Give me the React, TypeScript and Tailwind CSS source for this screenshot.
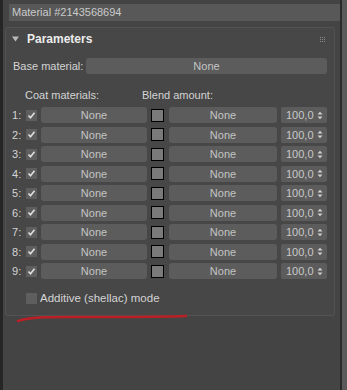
import React from 'react';

const rows = [1, 2, 3, 4, 5, 6, 7, 8, 9];

const Check: React.FC<{ checked?: boolean }> = ({ checked }) => (
    <div className="w-[11px] h-[11px] shrink-0 bg-[#5e5e5e] flex items-center justify-center">
        {checked && (
            <svg width="9" height="9" viewBox="0 0 9 9">
                <path d="M1.5 4.5 L3.5 6.8 L7.5 1.8" stroke="#e0e0e0" strokeWidth="1.6" fill="none" />
            </svg>
        )}
    </div>
);

const Btn: React.FC<{ className?: string; children?: React.ReactNode }> = ({ className, children }) => (
    <div className={`h-[16px] shrink-0 rounded-[3px] bg-[#5c5c5c] text-[#c4c4c4] flex items-center justify-center ${className ?? ''}`}>{children}</div>
);

const Spinner: React.FC = () => (
    <div className="w-[46px] h-[16px] shrink-0 rounded-[2px] bg-[#5c5c5c] text-[#c8c8c8] flex items-center pl-[5px] pr-[4px] justify-between">
        <span>100,0</span>
        <svg width="6" height="9" viewBox="0 0 6 9">
            <path d="M0.5 3.5 L3 0.8 L5.5 3.5 Z M0.5 5.5 L3 8.2 L5.5 5.5 Z" fill="#d0d0d0" />
        </svg>
    </div>
);

export default function App() {
    return (
        <div className="w-[347px] h-[390px] bg-[#3a3a3a] flex overflow-hidden text-[11px] whitespace-nowrap" style={{ fontFamily: '"Liberation Sans", Arial, sans-serif' }}>
            <div className="w-[3px] bg-[#262626]" />
            <div className="w-[337px] bg-[#444444] relative pt-[4px] pl-[2px]">
                <div className="ml-[4px] h-[17px] bg-[#585858] text-[#cacaca] flex items-center pl-[3px]">Material #2143568694</div>
                <div className="mt-[6px] w-[330px] h-[289px] bg-[#474747] border border-[#525252] rounded-[2px]">
                    <div className="h-[20px] flex items-center pl-[6px] pr-[9px] mt-[1px]">
                        <svg width="7" height="6" viewBox="0 0 7 6"><path d="M0 0.5 H7 L3.5 5.5 Z" fill="#b8b8b8" /></svg>
                        <span className="ml-[8px] font-bold text-[#ececec] text-[12px]">Parameters</span>
                        <div className="ml-auto grid grid-cols-3 gap-[1px]">
                            {Array.from({ length: 9 }).map((_, i) => <div key={i} className="w-[1px] h-[1px] bg-[#8a8a8a]" />)}
                        </div>
                    </div>
                    <div className="flex items-center mt-[9px] pl-[7px]">
                        <span className="w-[73px] text-[#d4d4d4]">Base material:</span>
                        <Btn className="w-[241px]">None</Btn>
                    </div>
                    <div className="flex mt-[13px] text-[#d4d4d4] h-[16px] items-center">
                        <span className="ml-[19px] w-[117px]">Coat materials:</span>
                        <span>Blend amount:</span>
                    </div>
                    <div className="mt-[2px]">
                        {rows.map(n => (
                            <div key={n} className="h-[19.5px] flex items-center">
                                <span className="w-[20px] shrink-0 pl-[6px] text-[#d4d4d4]">{n}:</span>
                                <Check checked />
                                <Btn className="ml-[4px] w-[106px]">None</Btn>
                                <div className="ml-[4px] w-[13px] h-[13px] shrink-0 border border-black bg-[#7a7a7a]" />
                                <Btn className="ml-[5px] w-[108px]">None</Btn>
                                <div className="ml-[4px]"><Spinner /></div>
                            </div>
                        ))}
                    </div>
                    <div className="flex items-center mt-[9px] pl-[20px]">
                        <Check />
                        <span className="ml-[3px] text-[#d4d4d4] text-[11.5px]">Additive (shellac) mode</span>
                    </div>
                </div>
                <svg className="absolute left-[13px] top-[312px]" width="175" height="13" viewBox="0 0 175 13">
                    <path d="M2 9 C 20 4, 40 5, 80 5 S 150 5, 170 4" stroke="#bb1f26" strokeWidth="2.5" fill="none" strokeLinecap="round" />
                </svg>
            </div>
            <div className="w-[2px] bg-[#2a2a2a]" />
            <div className="w-[5px] bg-[#5a5a5a]" />
        </div>
    );
}
